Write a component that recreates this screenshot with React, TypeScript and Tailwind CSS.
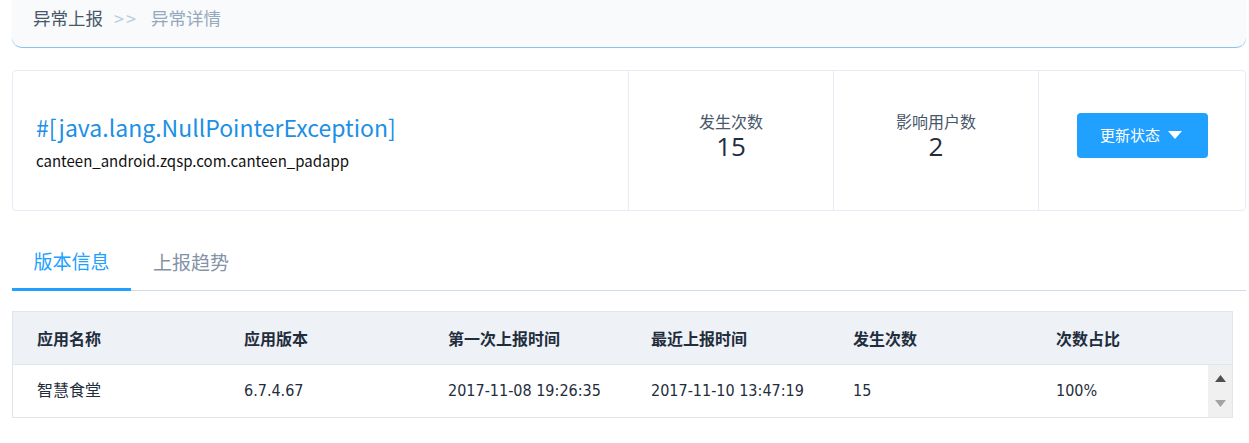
import React from "react";

const cjk = "font-['Noto_Sans_CJK_SC','Noto_Sans',sans-serif]";

const columns = ["应用名称", "应用版本", "第一次上报时间", "最近上报时间", "发生次数", "次数占比"];

const rows = [
  ["智慧食堂", "6.7.4.67", "2017-11-08 19:26:35", "2017-11-10 13:47:19", "15", "100%"],
];

function Stat({ label, value }: { label: string; value: string }) {
  return (
    <div className="flex flex-col items-center justify-center pb-[9px] border-l border-[#e8ebf5]">
      <div className="text-[16px] leading-[20px] text-[#48576a]">{label}</div>
      <div className="text-[26px] leading-[30px] text-[#1f2d3d] font-['Open_Sans',sans-serif]">{value}</div>
    </div>
  );
}

export default function App() {
  return (
    <div className={`min-h-screen bg-white ${cjk}`}>
      <div className="pl-[12px] pr-[3px]">
        {/* breadcrumb */}
        <div className="h-[48px] bg-[#f8fafc] rounded-b-[10px] border-b border-[#8cc3ec] shadow-[0_0_1px_#d5dde8] flex items-start pt-[6px] pl-[21px] text-[17.5px] leading-[24px]">
          <span className="text-[#48576a]">异常上报</span>
          <span className="text-[#bfcbd9] ml-[11px] mr-[13px] text-[18px] tracking-[2px]">&gt;&gt;</span>
          <span className="text-[#97a8be]">异常详情</span>
        </div>

        {/* summary card */}
        <div className="mt-[22px] h-[141px] border border-[#e8ebf5] rounded-[4px] grid grid-cols-[615px_205px_205px_1fr]">
          <div className="flex flex-col justify-center pl-[23px] pt-[3px]">
            <div className="text-[23px] leading-[30px] text-[#1c8fe6]">#[java.lang.NullPointerException]</div>
            <div className="mt-[8px] text-[15px] leading-[22px] text-[#111]">canteen_android.zqsp.com.canteen_padapp</div>
          </div>
          <Stat label="发生次数" value="15" />
          <Stat label="影响用户数" value="2" />
          <div className="flex items-center justify-center pb-[11px] border-l border-[#e8ebf5]">
            <button className="w-[131px] h-[45px] rounded-[4px] bg-[#20a0ff] text-white text-[15px] flex items-center justify-center gap-[8px] pr-[2px]">
              更新状态
              <svg width="14" height="9" viewBox="0 0 14 9">
                <path d="M0 0 H14 L7 8 Z" fill="#fff" />
              </svg>
            </button>
          </div>
        </div>

        {/* tabs */}
        <div className="mt-[23px] flex border-b border-[#d1dbe5] h-[57px]">
          <div className="w-[119px] flex items-center justify-center text-[19px] text-[#20a0ff] border-b-[3px] border-[#20a0ff] -mb-px">
            版本信息
          </div>
          <div className="ml-[22px] flex items-center text-[19px] text-[#8492a6]">上报趋势</div>
        </div>

        {/* table */}
        <div className="mt-[20px] w-[1221px] border border-[#dfe6ec]">
          <div className="grid grid-cols-[207px_204px_203px_202px_203px_1fr] h-[53px] bg-[#eef1f6] border-b border-[#dfe6ec] items-center">
            {columns.map((c) => (
              <div key={c} className="pl-[24px] text-[16px] font-bold text-[#1f2d3d]">
                {c}
              </div>
            ))}
          </div>
          {rows.map((r, i) => (
            <div key={i} className="flex h-[52px]">
              <div className="flex-1 grid grid-cols-[207px_204px_203px_202px_203px_1fr] items-center">
                {r.map((v, j) => (
                  <div
                    key={j}
                    className="pl-[24px] text-[16px] text-[#1f2d3d] font-['DejaVu_Sans_Condensed','DejaVu_Sans','Noto_Sans_CJK_SC',sans-serif] font-stretch-condensed"
                  >
                    {v}
                  </div>
                ))}
              </div>
              <div className="w-[24px] bg-[#f0f0f0] flex flex-col items-center justify-between py-[10px]">
                <svg width="11" height="7" viewBox="0 0 11 7">
                  <path d="M5.5 0 L11 7 H0 Z" fill="#505050" />
                </svg>
                <svg width="11" height="7" viewBox="0 0 11 7">
                  <path d="M0 0 H11 L5.5 7 Z" fill="#a3a3a3" />
                </svg>
              </div>
            </div>
          ))}
        </div>
      </div>
    </div>
  );
}
